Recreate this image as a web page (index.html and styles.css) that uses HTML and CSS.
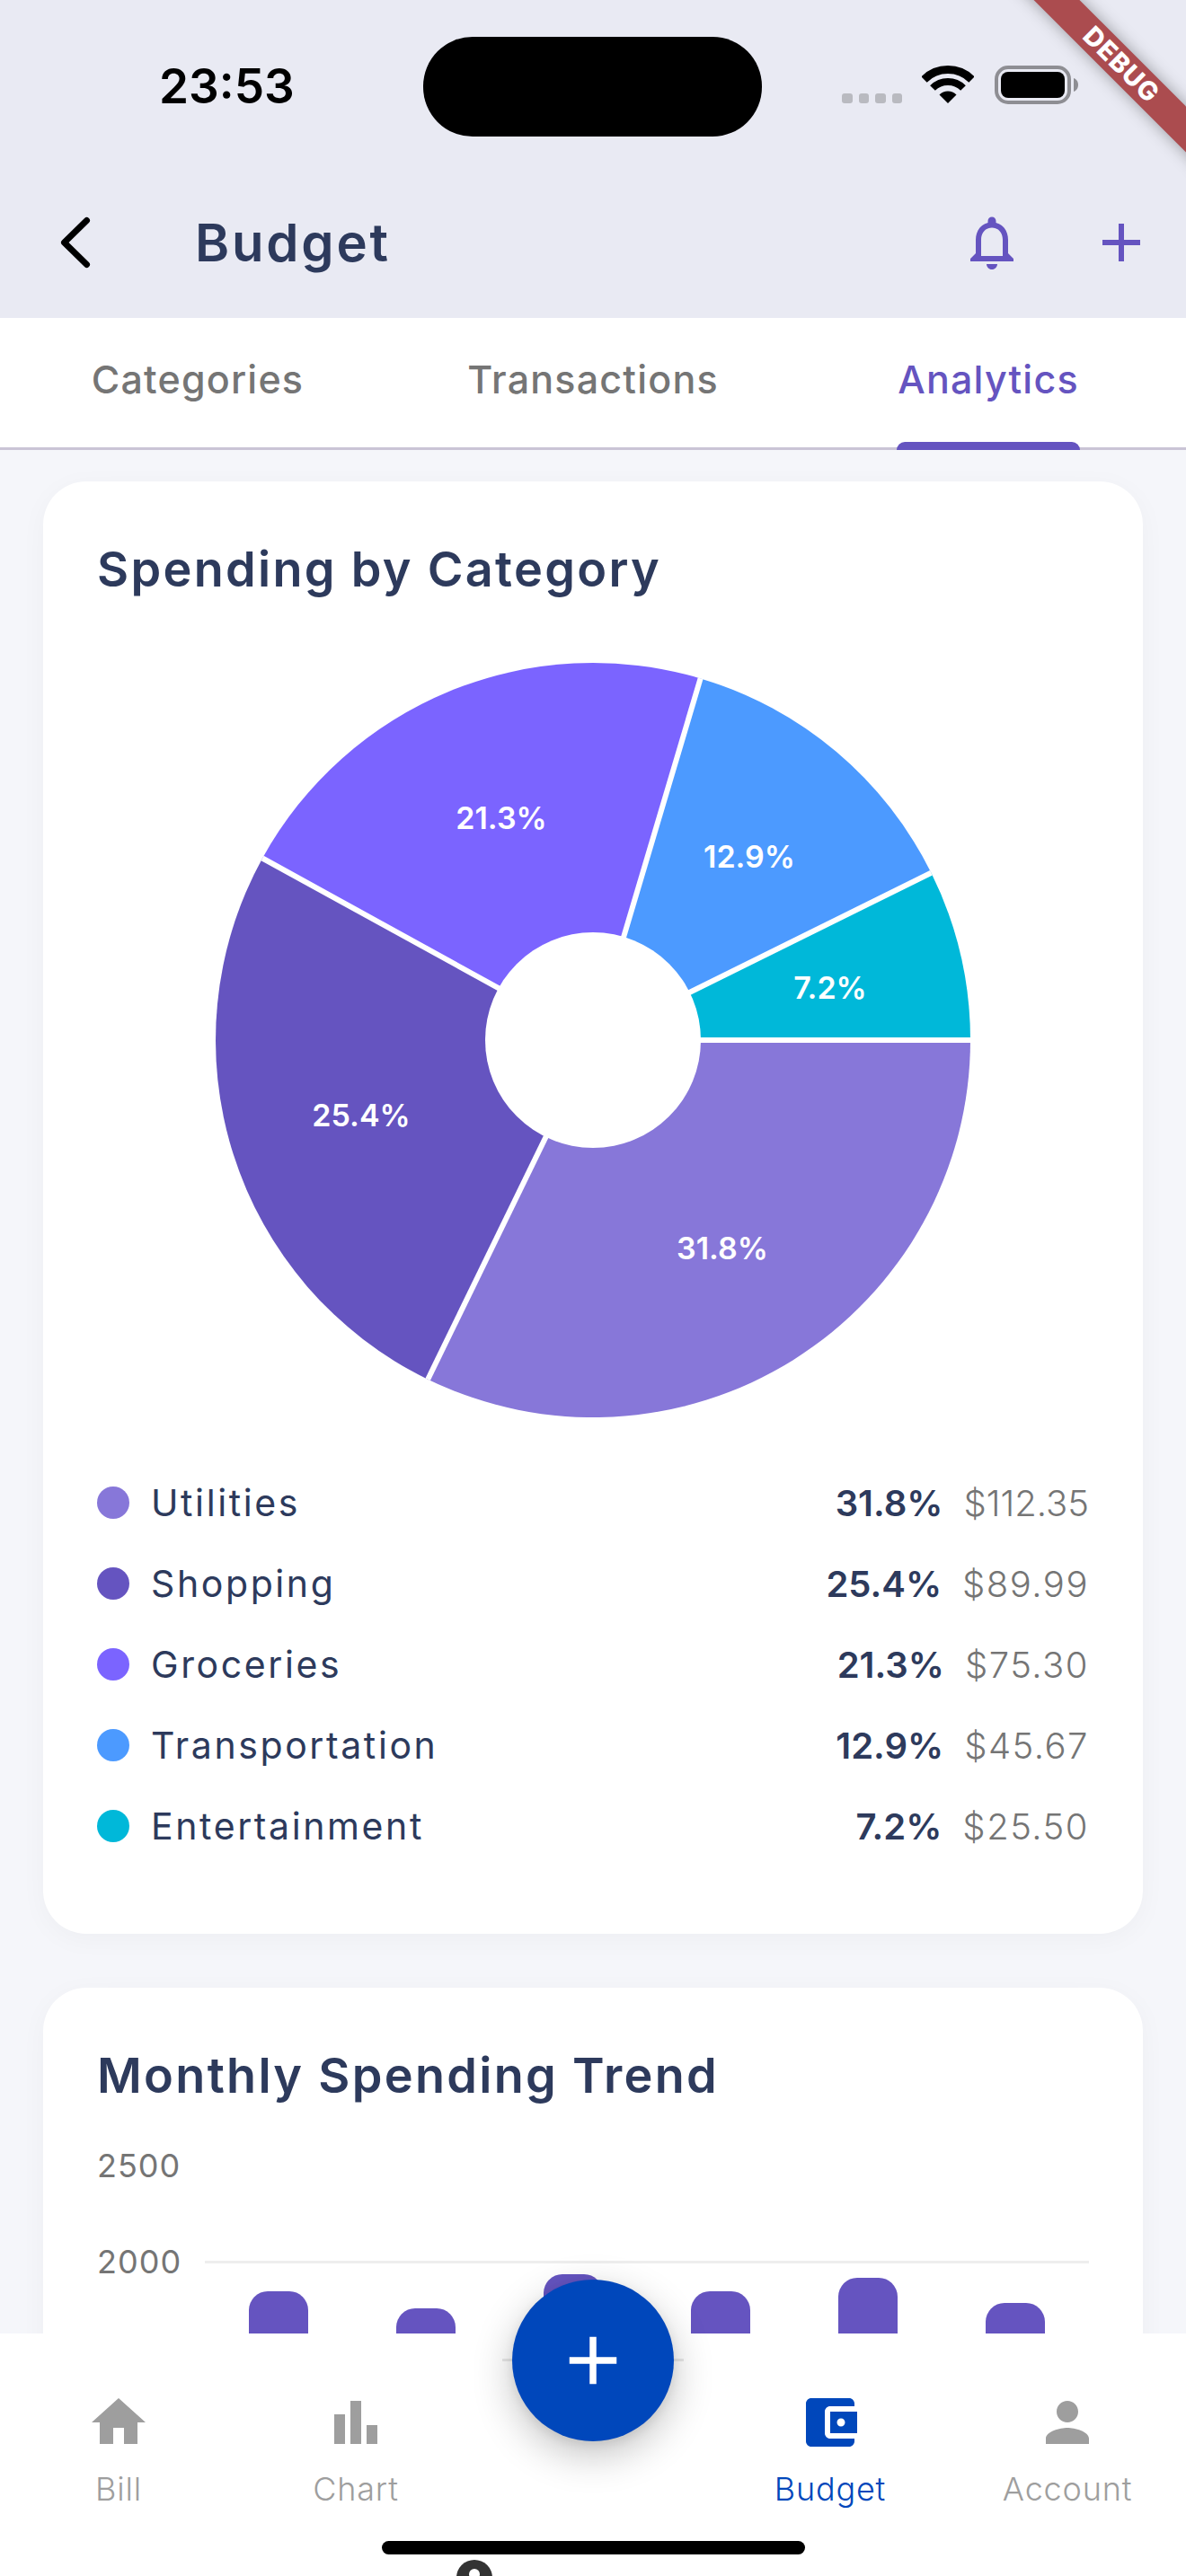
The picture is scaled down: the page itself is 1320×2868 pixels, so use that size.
FILE: index.html
```html
<!DOCTYPE html>
<html lang="en">
<head>
<meta charset="utf-8">
<title>Budget</title>
<link rel="stylesheet" href="styles.css">
</head>
<body>
<div class="phone">
  <header class="header">
    <div class="status">
      <div class="status-left"><span class="time">23:53</span></div>
      <div class="island"></div>
      <div class="status-right">
        <div class="signal"><i></i><i></i><i></i><i></i></div>
        <svg class="wifi" width="58" height="42" viewBox="0 0 58 42">
          <path d="M2.5 15.5A37.5 37.5 0 0 1 55.5 15.5" fill="none" stroke="#000" stroke-width="9"/>
          <path d="M12 25A24 24 0 0 1 46 25" fill="none" stroke="#000" stroke-width="8"/>
          <path d="M29 42L19.5 32.5A13.5 13.5 0 0 1 38.5 32.5Z" fill="#000"/>
        </svg>
        <svg class="battery" width="93" height="43" viewBox="0 0 93 43">
          <rect x="2" y="2" width="81" height="39" rx="13" fill="none" stroke="#8e8e93" stroke-width="4"/>
          <rect x="7" y="7" width="71" height="29" rx="8" fill="#000"/>
          <path d="M88 14c3 1 5 4 5 7.500s-2 6.500-5 7.500z" fill="#8e8e93"/>
        </svg>
      </div>
    </div>
    <div class="appbar">
      <svg class="icon-back" width="72" height="72" viewBox="0 0 72 72"><path d="M48.500 11.500L23.500 36L48.500 60.500" fill="none" stroke="#000" stroke-width="7" stroke-linecap="round" stroke-linejoin="round"/></svg>
      <h1 class="page-title">Budget</h1>
      <div class="actions">
        <svg class="icon-action" width="72" height="72" viewBox="0 0 24 24"><path d="M12 22c1.100 0 2-.9 2-2h-4c0 1.100.9 2 2 2zm6-6v-5c0-3.070-1.630-5.640-4.500-6.320V4c0-.83-.67-1.500-1.500-1.500s-1.500.67-1.500 1.500v.68C7.640 5.360 6 7.920 6 11v5l-2 2v1h16v-1l-2-2zm-2 1H8v-6c0-2.480 1.510-4.500 4-4.500s4 2.020 4 4.500v6z"/></svg>
        <svg class="icon-action" width="72" height="72" viewBox="0 0 24 24"><path d="M19 13h-6v6h-2v-6H5v-2h6V5h2v6h6v2z"/></svg>
      </div>
    </div>
  </header>

  <nav class="tabs">
    <div class="tab"><span class="tab-label">Categories</span></div>
    <div class="tab"><span class="tab-label">Transactions</span></div>
    <div class="tab tab-active"><span class="tab-label">Analytics</span></div>
  </nav>

  <main class="content">
    <section class="card card-pie">
      <h2 class="card-title">Spending by Category</h2>
      <svg class="pie" width="840" height="840" viewBox="0 0 840 840">
        <path fill="#8777d9" d="M420 420L840 420A420 420 0 0 1 236.200 797.700Z"/>
        <path fill="#6554c0" d="M420 420L236.200 797.700A420 420 0 0 1 52.100 217.500Z"/>
        <path fill="#7b64ff" d="M420 420L52.100 217.500A420 420 0 0 1 539.600 17.400Z"/>
        <path fill="#4c9aff" d="M420 420L539.600 17.400A420 420 0 0 1 796.400 233.800Z"/>
        <path fill="#00b8d9" d="M420 420L796.400 233.800A420 420 0 0 1 840 420Z"/>
        <g class="pie-gaps">
          <path d="M420 420L840 420"/>
          <path d="M420 420L236.200 797.700"/>
          <path d="M420 420L52.100 217.500"/>
          <path d="M420 420L539.600 17.400"/>
          <path d="M420 420L796.400 233.800"/>
        </g>
        <circle cx="420" cy="420" r="120" fill="#fff"/>
        <text class="pie-label" x="564" y="651">31.8%</text>
        <text class="pie-label" x="162" y="503">25.4%</text>
        <text class="pie-label" x="318" y="172">21.3%</text>
        <text class="pie-label" x="594" y="215">12.9%</text>
        <text class="pie-label" x="684" y="361">7.2%</text>
      </svg>
      <ul class="legend">
        <li class="legend-row"><span class="dot dot-utilities"></span><span class="legend-name">Utilities</span><span class="legend-pct">31.8%</span><span class="legend-val legend-val-tight">$112.35</span></li>
        <li class="legend-row"><span class="dot dot-shopping"></span><span class="legend-name">Shopping</span><span class="legend-pct">25.4%</span><span class="legend-val">$89.99</span></li>
        <li class="legend-row"><span class="dot dot-groceries"></span><span class="legend-name">Groceries</span><span class="legend-pct">21.3%</span><span class="legend-val">$75.30</span></li>
        <li class="legend-row"><span class="dot dot-transport"></span><span class="legend-name">Transportation</span><span class="legend-pct">12.9%</span><span class="legend-val">$45.67</span></li>
        <li class="legend-row"><span class="dot dot-entertainment"></span><span class="legend-name">Entertainment</span><span class="legend-pct">7.2%</span><span class="legend-val">$25.50</span></li>
      </ul>
    </section>

    <section class="card card-trend">
      <h2 class="card-title">Monthly Spending Trend</h2>
      <div class="trend">
        <div class="trend-row"><span class="axis-label">2500</span></div>
        <div class="trend-row"><span class="axis-label">2000</span><span class="gridline"></span></div>
        <div class="bars">
          <div class="bar-slot"><div class="bar" style="height:398px"></div></div>
          <div class="bar-slot"><div class="bar" style="height:379px"></div></div>
          <div class="bar-slot"><div class="bar" style="height:417px"></div></div>
          <div class="bar-slot"><div class="bar" style="height:398px"></div></div>
          <div class="bar-slot"><div class="bar" style="height:413px"></div></div>
          <div class="bar-slot"><div class="bar" style="height:385px"></div></div>
        </div>
      </div>
    </section>
  </main>

  <footer class="bottom-nav">
    <div class="nav-item">
      <svg width="72" height="72" viewBox="0 0 24 24"><path d="M10 20v-6h4v6h5v-8h3L12 3 2 12h3v8z"/></svg>
      <span class="nav-label">Bill</span>
    </div>
    <div class="nav-item">
      <svg width="72" height="72" viewBox="0 0 24 24"><path d="M4 9h4v11H4zm12 4h4v7h-4zm-6-9h4v16h-4z"/></svg>
      <span class="nav-label">Chart</span>
    </div>
    <div class="nav-item"></div>
    <div class="nav-item nav-active">
      <svg width="72" height="72" viewBox="0 0 24 24"><path d="M21 18v1c0 1.100-.9 2-2 2H5c-1.110 0-2-.9-2-2V5c0-1.100.89-2 2-2h14c1.100 0 2 .9 2 2v1h-9c-1.110 0-2 .9-2 2v8c0 1.100.89 2 2 2h9zm-9-2h10V8H12v8zm4-2.500c-.83 0-1.500-.67-1.500-1.500s.67-1.500 1.500-1.500 1.500.67 1.500 1.500-.67 1.500-1.500 1.500z"/></svg>
      <span class="nav-label">Budget</span>
    </div>
    <div class="nav-item">
      <svg width="72" height="72" viewBox="0 0 24 24"><path d="M12 12c2.210 0 4-1.790 4-4s-1.790-4-4-4-4 1.790-4 4 1.790 4 4 4zm0 2c-2.670 0-8 1.340-8 4v2h16v-2c0-2.660-5.330-4-8-4z"/></svg>
      <span class="nav-label">Account</span>
    </div>
    <span class="notch-line"></span>
    <button class="fab" type="button" aria-label="Add">
      <svg width="90" height="90" viewBox="0 0 24 24"><path d="M19 13h-6v6h-2v-6H5v-2h6V5h2v6h6v2z"/></svg>
    </button>
    <span class="home-indicator"></span>
    <svg class="peek-avatar" width="40" height="40" viewBox="0 0 40 40"><circle cx="20" cy="20" r="20" fill="#333"/><circle cx="20" cy="16" r="6" fill="#fff"/></svg>
  </footer>

  <div class="debug-banner">DEBUG</div>
</div>
</body>
</html>
```

FILE: styles.css
```css
* { box-sizing: border-box; }
html, body { margin: 0; padding: 0; }
body { font-family: "Inter", "Liberation Sans", sans-serif; background: #f5f6fa; }

.phone {
  position: relative;
  width: 1320px;
  height: 2868px;
  overflow: hidden;
  display: flex;
  flex-direction: column;
  background: #f5f6fa;
}

/* header */
.header { height: 354px; background: #e9eaf3; flex: none; }
.status { display: grid; grid-template-columns: 471px 377px 472px; height: 152px; padding-top: 41px; }
.status-left { padding-left: 177px; display: flex; align-items: center; }
.time { font-size: 53px; font-weight: 600; color: #000; letter-spacing: 0; line-height: 1; }
.island { background: #000; border-radius: 55px; height: 111px; }
.status-right { padding-left: 89px; display: flex; align-items: flex-end; padding-bottom: 36px; }
.signal { display: flex; gap: 7px; margin-right: 22px; padding-bottom: 1px; }
.signal i { width: 11.500px; height: 11px; border-radius: 3px; background: #b9bac0; display: block; }
.wifi { margin-right: 23px; margin-bottom: 1px; display: block; }
.battery { display: block; }

.appbar { display: flex; align-items: center; height: 72px; margin-top: 82px; padding: 0 36px 0 48px; }
.icon-back { display: block; flex: none; }
.page-title { margin: 0 0 0 97px; font-size: 58px; line-height: 72px; font-weight: 600; color: #2d3a5c; letter-spacing: 2.800px; }
.actions { margin-left: auto; display: flex; gap: 72px; }
.icon-action { display: block; fill: #6554c0; }

/* tabs */
.tabs { display: flex; flex: none; height: 147px; background: #fff; border-bottom: 3px solid #cac4d6; }
.tab { flex: 1; display: flex; align-items: center; justify-content: center; padding-bottom: 8px; font-size: 43px; font-weight: 500; letter-spacing: 1.200px; color: #757575; }
.tab-active { color: #6554c0; }
.tab-label { position: relative; display: block; line-height: 50px; }
.tab-active .tab-label::after {
  content: "";
  position: absolute;
  left: -1px; right: -1px; bottom: -54px;
  height: 9px;
  background: #6554c0;
  border-radius: 9px 9px 0 0;
}

/* content */
.content { flex: 1; min-height: 0; display: flex; flex-direction: column; gap: 60px; padding: 35px 48px 0; }
.card { background: #fff; border-radius: 48px; box-shadow: 0 6px 30px rgba(0, 0, 0, 0.035); padding: 60px 60px 0; flex: none; }
.card-pie { height: 1617px; }
.card-trend { flex: 1; min-height: 0; }
.card-title { margin: 0; font-size: 54px; line-height: 76px; font-weight: 600; color: #2d3a5c; letter-spacing: 2.300px; }

.pie { display: block; margin: 66px auto 0; }
.pie-gaps path { stroke: #fff; stroke-width: 6; fill: none; }
.pie-label { font-family: "Inter", "Liberation Sans", sans-serif; font-size: 34px; font-weight: 600; fill: #fff; text-anchor: middle; dominant-baseline: central; }

.legend { list-style: none; margin: 50px 0 0; padding: 0; }
.legend-row { display: flex; align-items: center; height: 90px; }
.dot { width: 36px; height: 36px; border-radius: 50%; flex: none; margin-right: 24px; }
.dot-utilities { background: #8777d9; }
.dot-shopping { background: #6554c0; }
.dot-groceries { background: #7b64ff; }
.dot-transport { background: #4c9aff; }
.dot-entertainment { background: #00b8d9; }
.legend-name { flex: 1; font-size: 41px; font-weight: 400; letter-spacing: 2.600px; color: #2d3a5c; }
.legend-pct { font-size: 40px; font-weight: 600; color: #2d3a5c; margin-right: 23px; }
.legend-val { font-size: 40px; font-weight: 300; letter-spacing: 1.500px; color: #757575; }
.legend-val-tight { letter-spacing: 0; }

/* trend chart */
.trend { position: relative; margin-top: 8px; }
.trend-row { display: flex; align-items: center; height: 107.500px; }
.axis-label { width: 120px; flex: none; font-size: 36px; font-weight: 400; color: #757575; letter-spacing: 1px; }
.gridline { flex: 1; height: 3px; background: #eeeeee; }
.bars { position: absolute; left: 120px; right: 0; top: 54px; height: 538px; display: flex; align-items: flex-end; }
.bar-slot { flex: 1; display: flex; justify-content: center; align-items: flex-end; height: 100%; }
.bar { width: 66px; background: #6554c0; border-radius: 21px 21px 0 0; }

/* bottom nav */
.bottom-nav {
  position: absolute;
  left: 0; right: 0; bottom: 0;
  height: 270px;
  background: #fff;
  display: grid;
  grid-template-columns: repeat(5, 264px);
  padding-top: 63px;
}
.nav-item { display: flex; flex-direction: column; align-items: center; fill: #9e9e9e; color: #9e9e9e; }
.nav-item svg { display: block; }
.nav-active { fill: #0047bb; color: #0047bb; }
.nav-label { margin-top: 16px; font-size: 36px; line-height: 44px; letter-spacing: 0.800px; font-weight: 300; }
.notch-line { position: absolute; left: 559px; top: 28px; width: 202px; height: 3px; background: #e8e8e8; }
.fab {
  position: absolute;
  left: 570px; top: -60px;
  width: 180px; height: 180px;
  border: 0; border-radius: 50%; padding: 0;
  background: #0047bb;
  fill: #fff;
  display: flex; align-items: center; justify-content: center;
  box-shadow: 0 15px 45px rgba(0, 0, 0, 0.24), 0 4px 12px rgba(0, 0, 0, 0.08);
}
.fab svg { display: block; }
.home-indicator { position: absolute; left: 425px; top: 231px; width: 471px; height: 15px; border-radius: 8px; background: #000; }
.peek-avatar { position: absolute; left: 508px; top: 252px; display: block; }

/* debug ribbon */
.debug-banner {
  position: absolute;
  right: -78px; top: 54px;
  width: 300px; height: 36px;
  transform: rotate(45deg);
  background: #ab4c4f;
  box-shadow: 0 0 18px rgba(0, 0, 0, 0.35);
  color: #fff;
  font-size: 29px;
  font-weight: 800;
  line-height: 36px;
  text-align: center;
  letter-spacing: 1px;
}
```
